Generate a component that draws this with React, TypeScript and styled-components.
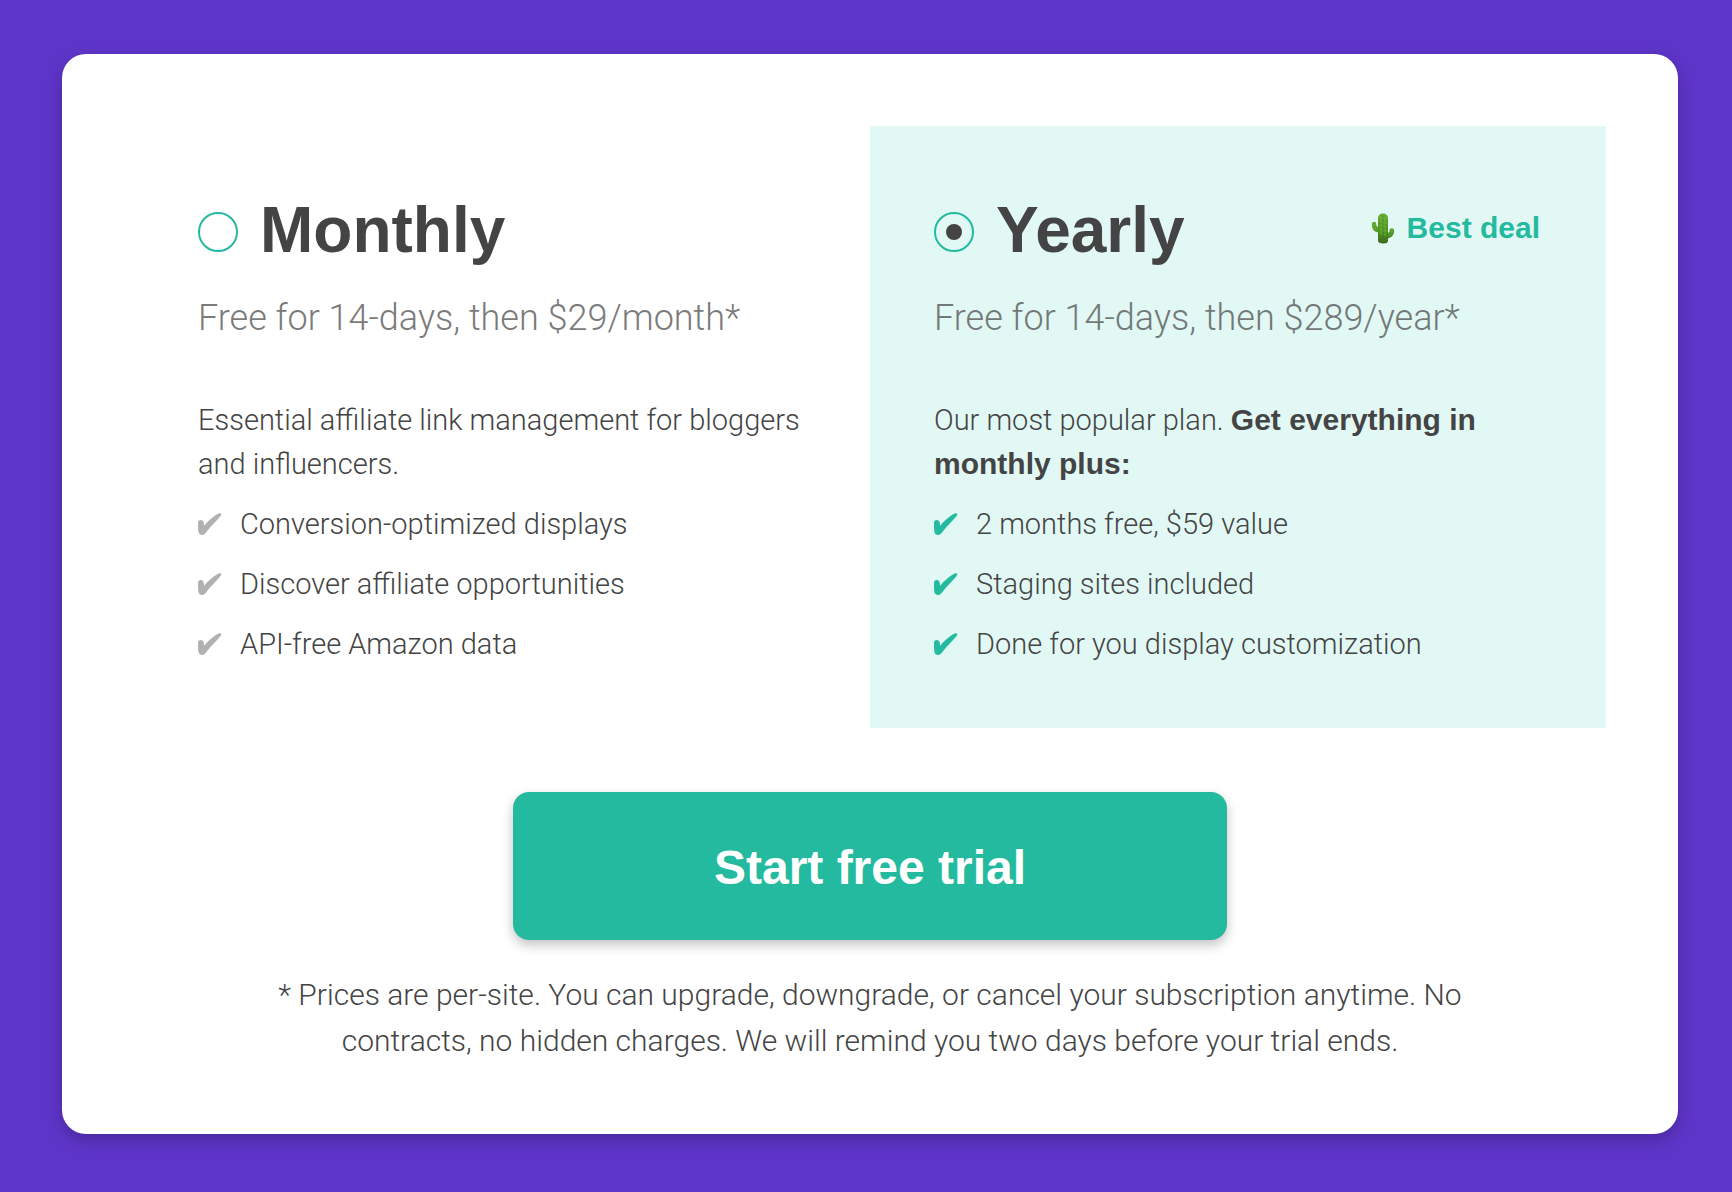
import React, { useState } from 'react';
import styled, { createGlobalStyle, ThemeProvider } from 'styled-components';

const theme = {
  purple: '#5e35c9',
  teal: '#24baa0',
  mint: '#e2f8f5',
  ink: '#444444',
  muted: '#b1b1b1',
  light: "Roboto, 'Liberation Sans', sans-serif",
  bold: "'Liberation Sans', Arial, sans-serif",
};

const GlobalStyle = createGlobalStyle`
  *, *::before, *::after {
    box-sizing: border-box;
  }
  body {
    margin: 0;
    background: ${theme.purple};
    color: ${theme.ink};
    font-family: ${theme.light};
    font-size: 29px;
    font-weight: 300;
    line-height: 44px;
  }
`;

const Page = styled.main`
  padding: 54px 54px 58px 62px;
`;

const Card = styled.form`
  display: flex;
  flex-direction: column;
  align-items: center;
  padding: 72px 72px 70px;
  border-radius: 24px;
  background: #ffffff;
  box-shadow: 0 6px 16px rgba(0, 0, 0, 0.22);
`;

const Plans = styled.div`
  display: grid;
  grid-template-columns: repeat(2, minmax(0, 1fr));
  align-self: stretch;
`;

const Plan = styled.section<{ $featured: boolean }>`
  padding: 64px 64px 62px;
  background: ${({ $featured, theme: t }) => ($featured ? t.mint : 'transparent')};
`;

const PlanHeader = styled.header`
  display: flex;
  align-items: center;
  justify-content: space-between;
`;

const PlanLabel = styled.label`
  display: flex;
  align-items: center;
  gap: 22px;
  cursor: pointer;
`;

const Radio = styled.input`
  appearance: none;
  flex: none;
  display: grid;
  place-items: center;
  width: 40px;
  height: 40px;
  margin: 4px 0 0;
  border: 2px solid ${({ theme: t }) => t.teal};
  border-radius: 50%;
  cursor: pointer;

  &:checked::before {
    content: '';
    width: 16px;
    height: 16px;
    border-radius: 50%;
    background: ${({ theme: t }) => t.ink};
  }
`;

const PlanName = styled.h2`
  margin: 0;
  font: 700 64px/80px ${({ theme: t }) => t.bold};
`;

const Badge = styled.span`
  display: flex;
  align-items: center;
  gap: 12px;
  padding: 0 2px 4px 0;
  color: ${({ theme: t }) => t.teal};
  font: 700 30px/36px ${({ theme: t }) => t.bold};
`;

const Price = styled.p`
  margin: 26px 0 58px;
  font-size: 36px;
  line-height: 44px;
  opacity: 0.7;
`;

const Summary = styled.p`
  margin: 0 0 16px;
`;

const Strong = styled.strong`
  font: 700 30px/44px ${({ theme: t }) => t.bold};
`;

const Features = styled.ul`
  display: grid;
  gap: 16px;
  margin: 0;
  padding: 0;
  list-style: none;
`;

const Feature = styled.li<{ $featured: boolean }>`
  display: flex;
  align-items: center;
  gap: 18px;

  svg {
    flex: none;
    color: ${({ $featured, theme: t }) => ($featured ? t.teal : t.muted)};
  }
`;

const TrialButton = styled.button`
  width: min(100%, 714px);
  margin: 64px 0 32px;
  padding: 48px 32px 44px;
  border: 0;
  border-radius: 16px;
  background: ${({ theme: t }) => t.teal};
  box-shadow: 0 5px 12px rgba(0, 0, 0, 0.24);
  color: #ffffff;
  font: 700 48px/56px ${({ theme: t }) => t.bold};
  cursor: pointer;
`;

const Terms = styled.p`
  max-width: 1216px;
  margin: 0;
  font-size: 30px;
  line-height: 46px;
  text-align: center;
`;

const CheckIcon = () => (
  <svg width="24" height="22" viewBox="0 0 24 22" aria-hidden="true">
    <path
      fill="currentColor"
      d="M0 10C0 8 1 7 2.800 7c1.700 0 2.700.9 2.900 2.500l.4 3.200C10.300 8 15.500 3.200 20.600.6c1.900-1 3.400.1 2.300 2C21.700 4.600 12.500 13.800 8.600 18.800 6.900 21 5.900 21.900 4.100 21.900c-2.100 0-3.500-1.200-3.800-3.500C0 16 0 13 0 10Z"
    />
  </svg>
);

const CactusIcon = () => (
  <svg width="24" height="31" viewBox="0 0 24 31" aria-hidden="true">
    <defs>
      <linearGradient id="cactus" x1="0" y1="0" x2="0" y2="1">
        <stop offset="0" stopColor="#68ae30" />
        <stop offset="0.6" stopColor="#529c29" />
        <stop offset="1" stopColor="#3a671c" />
      </linearGradient>
    </defs>
    <path
      fill="url(#cactus)"
      d="M7 5.500C7 2.500 9 .5 12 .5s5 2 5 5v14.300c1.100-.4 1.600-1 1.600-2.100 0-1.500.8-2.400 2.200-2.400s2.300.9 2.300 2.400c0 4.200-2.300 6.800-6.100 7.500V28c0 1.700-1.900 2.500-4.500 2.500S7 29.700 7 28v-8.500C2.800 18.700.9 15.900.9 11.300c0-1.600.8-2.500 2.200-2.500s2.200.9 2.200 2.400c0 1.400.500 2.200 1.700 2.700Z"
    />
    <path
      fill="none"
      stroke="#8fc44c"
      strokeWidth="1"
      strokeLinecap="round"
      strokeDasharray="1 3"
      opacity="0.7"
      d="M10 4v18M14 5v17M3 11c0 3 1 5 4 6.500M21 18c0 2-1 3.500-3 4.500"
    />
    <path
      fill="none"
      stroke="#2f7419"
      strokeWidth="1"
      strokeLinecap="round"
      strokeDasharray="1 3"
      opacity="0.6"
      d="M12 3v24M16 8v18M8 9v17"
    />
  </svg>
);

type PlanData = {
  id: string;
  name: string;
  price: string;
  summary: React.ReactNode;
  features: string[];
  badge?: string;
};

const plans: PlanData[] = [
  {
    id: 'monthly',
    name: 'Monthly',
    price: 'Free for 14-days, then $29/month*',
    summary: 'Essential affiliate link management for bloggers and influencers.',
    features: [
      'Conversion-optimized displays',
      'Discover affiliate opportunities',
      'API-free Amazon data',
    ],
  },
  {
    id: 'yearly',
    name: 'Yearly',
    price: 'Free for 14-days, then $289/year*',
    summary: (
      <>
        Our most popular plan. <Strong>Get everything in monthly plus:</Strong>
      </>
    ),
    features: [
      '2 months free, $59 value',
      'Staging sites included',
      'Done for you display customization',
    ],
    badge: 'Best deal',
  },
];

export default function App() {
  const [selected, setSelected] = useState('yearly');

  return (
    <ThemeProvider theme={theme}>
      <GlobalStyle />
      <Page>
        <Card onSubmit={(event) => event.preventDefault()}>
          <Plans role="radiogroup">
            {plans.map((plan) => {
              const featured = Boolean(plan.badge);
              return (
                <Plan key={plan.id} $featured={featured}>
                  <PlanHeader>
                    <PlanLabel htmlFor={plan.id}>
                      <Radio
                        type="radio"
                        id={plan.id}
                        name="plan"
                        value={plan.id}
                        checked={selected === plan.id}
                        onChange={() => setSelected(plan.id)}
                      />
                      <PlanName>{plan.name}</PlanName>
                    </PlanLabel>
                    {plan.badge && (
                      <Badge>
                        <CactusIcon />
                        {plan.badge}
                      </Badge>
                    )}
                  </PlanHeader>
                  <Price>{plan.price}</Price>
                  <Summary>{plan.summary}</Summary>
                  <Features>
                    {plan.features.map((feature) => (
                      <Feature key={feature} $featured={featured}>
                        <CheckIcon />
                        {feature}
                      </Feature>
                    ))}
                  </Features>
                </Plan>
              );
            })}
          </Plans>
          <TrialButton type="submit">Start free trial</TrialButton>
          <Terms>
            * Prices are per-site. You can upgrade, downgrade, or cancel your subscription anytime.
            No contracts, no hidden charges. We will remind you two days before your trial ends.
          </Terms>
        </Card>
      </Page>
    </ThemeProvider>
  );
}
